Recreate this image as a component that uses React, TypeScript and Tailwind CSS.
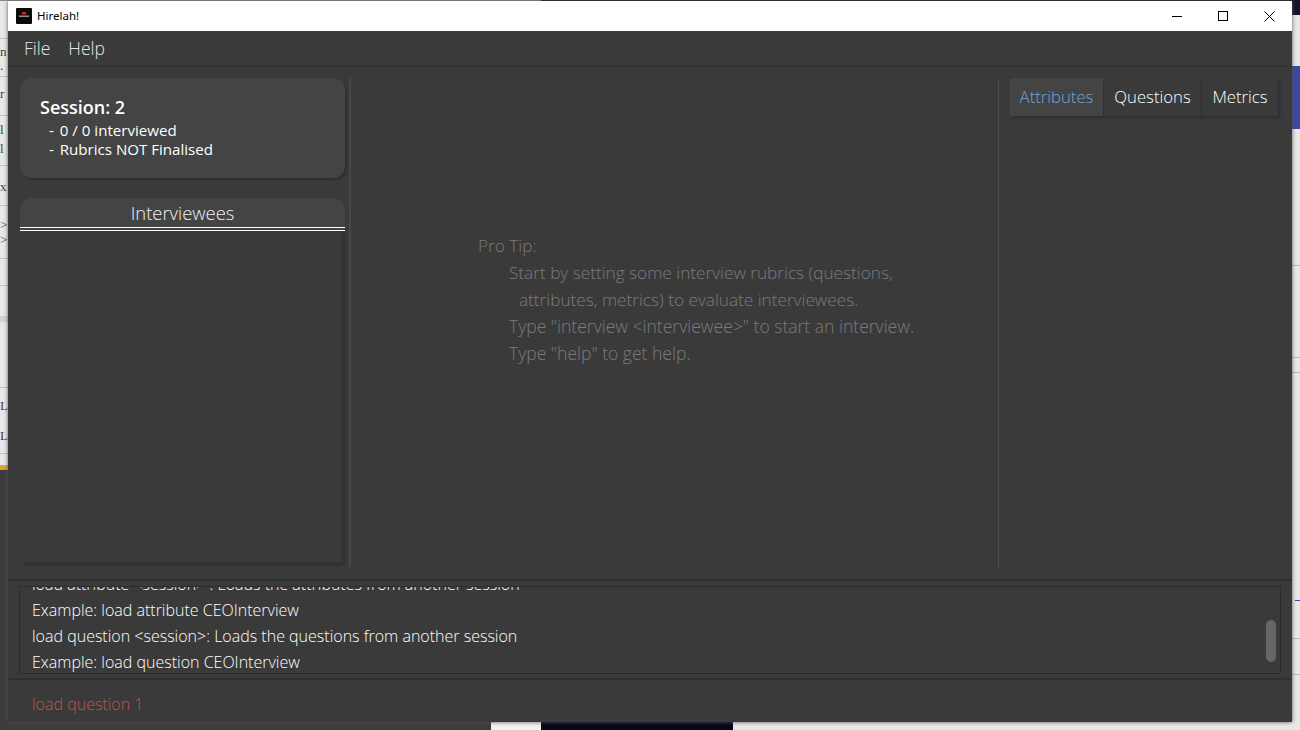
const font = "font-['Open_Sans','Noto_Sans',sans-serif]";

const tabs = [
  { name: "Attributes", active: true, width: "w-[93px]" },
  { name: "Questions", active: false, width: "w-[97px]" },
  { name: "Metrics", active: false, width: "w-[76px]" },
];

// bits of the page that peeks out left of the window
const peeks = [
  { text: "n", top: "top-[44px]" },
  { text: ".", top: "top-[58px]" },
  { text: "r", top: "top-[86px]" },
  { text: "l", top: "top-[122px]" },
  { text: "l", top: "top-[141px]" },
  { text: "x", top: "top-[179px]" },
  { text: ">", top: "top-[217px]" },
  { text: ">", top: "top-[232px]" },
  { text: "L", top: "top-[398px]" },
  { text: "L", top: "top-[428px]" },
];

const leftLines = ["top-[38px]", "top-[76px]", "top-[115px]", "top-[165px]", "top-[205px]", "top-[258px]", "top-[285px]", "top-[387px]", "top-[453px]"];
const rightLines = ["top-[265px]", "top-[357px]", "top-[372px]", "top-[638px]", "top-[674px]"];

const AppIcon = () => (
  <svg width="16" height="16" viewBox="0 0 16 16" className="shrink-0">
    <rect width="16" height="16" rx="1" fill="#0b0b0b" />
    <rect x="6" y="4" width="4" height="2.5" fill="#c8222a" />
    <rect x="3" y="7.5" width="10" height="1.5" fill="#8f8f8f" />
  </svg>
);

const TitleBar = () => (
  <div className="flex h-[30px] items-center bg-white pl-2">
    <AppIcon />
    <span className="ml-[5px] font-['Noto_Sans',sans-serif] text-[11.5px] text-black">Hirelah!</span>
    <div className="ml-auto flex items-center">
      <div className="flex w-[46px] justify-center">
        <div className="h-px w-2.5 bg-black" />
      </div>
      <div className="flex w-[46px] justify-center">
        <div className="size-2.5 border border-black" />
      </div>
      <div className="flex w-[46px] justify-center">
        <svg width="11" height="11" viewBox="0 0 11 11" stroke="#000" fill="none">
          <path d="M0.5 0.5 10.5 10.5M10.5 0.5 0.5 10.5" />
        </svg>
      </div>
    </div>
  </div>
);

const LeftPanel = () => (
  <div className="flex w-[343px] shrink-0 flex-col border-r-2 border-[#474747] pl-3 pr-[3px] pb-[2px]">
    <div className="h-[100px] w-[325px] rounded-xl bg-[#444444] pl-5 pt-[17px] text-white shadow-[2px_2px_2px_#303030]">
      <p className="text-lg leading-[24px] font-semibold">Session: 2</p>
      <p className="pl-[9px] pt-[2px] text-[15.1px] leading-[19px]">
        <span className="pr-[2px]">-</span> 0 / 0 interviewed
      </p>
      <p className="pl-[9px] text-[15.1px] leading-[19px]">
        <span className="pr-[2px]">-</span> Rubrics NOT Finalised
      </p>
    </div>
    <div className="mt-5 flex min-h-0 flex-1 flex-col">
      <div className="h-[33px] w-[325px] rounded-t-xl border-b-[4px] border-double border-white bg-[#444444] text-center text-[18.4px] leading-[29px] font-light text-[#f0f0f0]">
        Interviewees
      </div>
      <div className="mr-0 ml-[3px] flex-1 border-r-4 border-b-4 border-[#323232]" />
    </div>
  </div>
);

const ProTip = () => (
  <div className="flex flex-1 flex-col pl-[127px] pt-[154px] text-[17.2px] leading-[27px] font-light text-[#7a7a7a]">
    <p>Pro Tip:</p>
    <p className="pl-[31px]">Start by setting some interview rubrics (questions,</p>
    <p className="pl-[41px]">attributes, metrics) to evaluate interviewees.</p>
    <p className="pl-[31px] text-[17.55px]">Type "interview &lt;interviewee&gt;" to start an interview.</p>
    <p className="pl-[31px] text-[17.55px]">Type "help" to get help.</p>
  </div>
);

const RightPanel = () => (
  <div className="flex w-[294px] shrink-0 border-l border-[#4a4a4a] pl-[11px]">
    <div className="flex h-[39px] font-light">
      {tabs.map((tab) => (
        <div
          key={tab.name}
          className={`${tab.width} mr-px h-[38px] text-center text-[16.7px] leading-[37px] shadow-[2px_2px_2px_#303030] ${
            tab.active ? "bg-[#444444] text-[#6ea5d6]" : "bg-[#3a3a3a] text-white"
          }`}
        >
          {tab.name}
        </div>
      ))}
    </div>
  </div>
);

const ResultBox = () => (
  <div className="h-[101px] border-y-2 border-[#303030] bg-[#3a3a3a] px-[11px] pt-[5px]">
    <div className="relative h-[88px] w-full overflow-hidden border border-[#2c2c2c] pl-3 text-base leading-[26px] font-light text-white">
      <p className="-mt-[16px]">load attribute &lt;session&gt; : Loads the attributes from another session</p>
      <p>Example: load attribute CEOInterview</p>
      <p>load question &lt;session&gt;: Loads the questions from another session</p>
      <p>Example: load question CEOInterview</p>
      <div className="absolute top-[33px] right-[4px] h-[42px] w-2.5 rounded-full bg-[#666666]" />
    </div>
  </div>
);

export default function App() {
  return (
    <div className="relative h-[730px] w-[1300px] overflow-hidden bg-[#e8e8e8]">
      {/* desktop behind the window */}
      <div className="absolute top-0 left-0 h-px w-[541px] bg-[#8a8a8a]" />
      <div className="absolute top-0 right-0 h-px w-[759px] bg-[#14142a]" />
      <div className="absolute top-0 right-0 h-[15px] w-[8px] bg-[#14142a]" />
      <div className="absolute top-[66px] right-0 h-[63px] w-[8px] bg-[#3b4a9c]" />
      {rightLines.map((top) => (
        <div key={top} className={`absolute right-0 h-px w-[8px] bg-[#b8b8b8] ${top}`} />
      ))}
      <div className="absolute top-[600px] right-0 h-px w-[5px] bg-[#3b4a9c]" />
      {leftLines.map((top) => (
        <div key={top} className={`absolute left-0 h-px w-[8px] bg-[#c4c4c4] ${top}`} />
      ))}
      <div className="absolute top-[316px] left-0 h-[6px] w-[8px] bg-[#d4d4d4]" />
      {peeks.map((peek) => (
        <span
          key={peek.top}
          className={`absolute left-0 font-['Liberation_Serif',serif] text-[13px] leading-[16px] text-[#444444] ${peek.top}`}
        >
          {peek.text}
        </span>
      ))}
      <div className="absolute top-[465px] left-0 h-[5px] w-[8px] bg-[#d9a93a]" />
      <div className="absolute top-[470px] left-0 h-[260px] w-[8px] bg-[#3c3c3c]" />
      <div className="absolute bottom-0 left-0 h-[8px] w-[491px] bg-[#3c3c3c]" />
      <div className="absolute bottom-0 left-[491px] h-[8px] w-[50px] bg-[#f2f2f2]" />
      <div className="absolute bottom-0 left-[541px] h-[8px] w-[192px] bg-[#05051c]" />

      <div
        className={`absolute top-px left-2 flex h-[721px] w-[1284px] flex-col bg-[#3a3a3a] shadow-[0_0_4px_#555555] ${font}`}
      >
        <TitleBar />
        <div className="flex h-9 items-center gap-[18px] border-b border-[#2d2d2d] pl-4 text-[17.5px] font-light text-[#e6e6e6]">
          <span>File</span>
          <span>Help</span>
        </div>
        <div className="flex h-[512px] pt-[11px] pb-[11px]">
          <LeftPanel />
          <ProTip />
          <RightPanel />
        </div>
        <ResultBox />
        <div className="flex-1 pl-6 pt-[12px] text-base leading-[24px] font-light text-[#c05446]">load question 1</div>
      </div>
    </div>
  );
}
